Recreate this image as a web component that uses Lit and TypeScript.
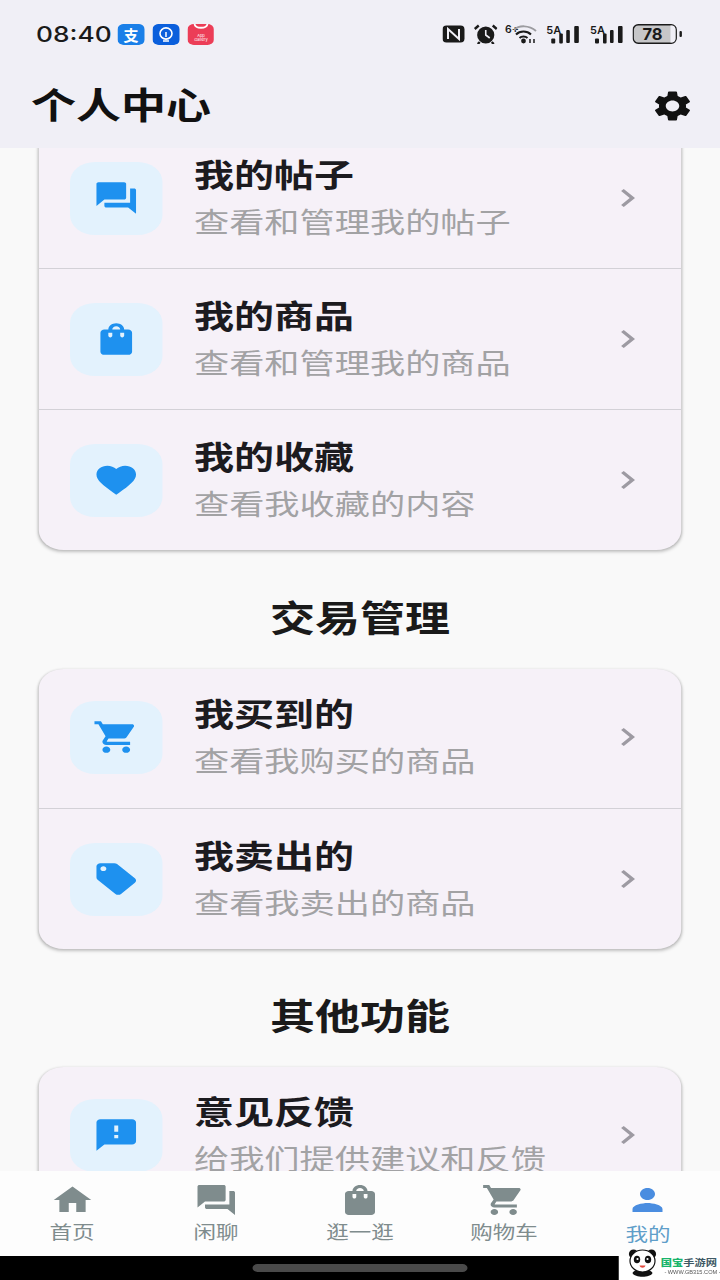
import { LitElement, html, css, svg } from "lit";
import { customElement } from "lit/decorators.js";

const P = {
  forum: "M21 6h-2v9H6v2c0 .55.45 1 1 1h11l4 4V7c0-.55-.45-1-1-1zm-4 6V3c0-.55-.45-1-1-1H3c-.55 0-1 .45-1 1v14l4-4h10c.55 0 1-.45 1-1z",
  bag: "M18 6h-2c0-2.21-1.79-4-4-4S8 3.79 8 6H6c-1.1 0-2 .9-2 2v12c0 1.1.9 2 2 2h12c1.1 0 2-.9 2-2V8c0-1.1-.9-2-2-2zm-8 4c0 .55-.45 1-1 1s-1-.45-1-1V8h2v2zm2-6c1.1 0 2 .9 2 2h-4c0-1.1.9-2 2-2zm4 6c0 .55-.45 1-1 1s-1-.45-1-1V8h2v2z",
  heart: "M12 21.35l-1.45-1.32C5.4 15.36 2 12.28 2 8.5 2 5.42 4.42 3 7.5 3c1.74 0 3.41.81 4.5 2.09C13.09 3.81 14.76 3 16.5 3 19.58 3 22 5.42 22 8.5c0 3.78-3.4 6.86-8.55 11.54L12 21.35z",
  cart: "M7 18c-1.1 0-1.99.9-1.99 2S5.9 22 7 22s2-.9 2-2-.9-2-2-2zM1 2v2h2l3.6 7.59-1.35 2.45c-.16.28-.25.61-.25.96 0 1.1.9 2 2 2h12v-2H7.42c-.14 0-.25-.11-.25-.25l.03-.12.9-1.63h7.45c.75 0 1.41-.41 1.75-1.03l3.58-6.49c.08-.14.12-.31.12-.48 0-.55-.45-1-1-1H5.21l-.94-2H1zm16 16c-1.1 0-1.99.9-1.99 2s.89 2 1.99 2 2-.9 2-2-.9-2-2-2z",
  tag: "M21.41 11.58l-9-9C12.05 2.22 11.55 2 11 2H4c-1.1 0-2 .9-2 2v7c0 .55.22 1.05.59 1.42l9 9c.36.36.86.58 1.41.58.55 0 1.05-.22 1.41-.59l7-7c.37-.36.59-.86.59-1.41 0-.55-.23-1.06-.59-1.42zM5.5 7C4.67 7 4 6.33 4 5.5S4.67 4 5.5 4 7 4.67 7 5.5 6.33 7 5.5 7z",
  feedback: "M20 2H4c-1.1 0-1.99.9-1.99 2L2 22l4-4h14c1.1 0 2-.9 2-2V4c0-1.1-.9-2-2-2zm-7 12h-2v-2h2v2zm0-4h-2V6h2v4z",
  gear: "M19.14 12.94c.04-.3.06-.61.06-.94 0-.32-.02-.64-.07-.94l2.03-1.58c.18-.14.23-.41.12-.61l-1.92-3.32c-.12-.22-.37-.29-.59-.22l-2.39.96c-.5-.38-1.03-.7-1.62-.94l-.36-2.54c-.04-.24-.24-.41-.48-.41h-3.84c-.24 0-.43.17-.47.41l-.36 2.54c-.59.24-1.13.57-1.62.94l-2.39-.96c-.22-.08-.47 0-.59.22L2.74 8.87c-.12.21-.08.47.12.61l2.03 1.58c-.05.3-.09.63-.09.94s.02.64.07.94l-2.03 1.58c-.18.14-.23.41-.12.61l1.92 3.32c.12.22.37.29.59.22l2.39-.96c.5.38 1.03.7 1.62.94l.36 2.54c.05.24.24.41.48.41h3.84c.24 0 .44-.17.47-.41l.36-2.54c.59-.24 1.13-.56 1.62-.94l2.39.96c.22.08.47 0 .59-.22l1.92-3.32c.12-.22.07-.47-.12-.61l-2.01-1.58zM12 15.6c-1.98 0-3.6-1.62-3.6-3.6s1.62-3.6 3.6-3.6 3.6 1.62 3.6 3.6-1.62 3.6-3.6 3.6z",
  home: "M10 20v-6h4v6h5v-8h3L12 3 2 12h3v8z",
  person: "M12 12c2.21 0 4-1.79 4-4s-1.79-4-4-4-4 1.79-4 4 1.79 4 4 4zm0 2c-2.67 0-8 1.34-8 4v2h16v-2c0-2.66-5.33-4-8-4z",
  chevron: "M10 6L8.59 7.41 13.17 12l-4.58 4.59L10 18l6-6z",
};

const icon = (d: string, cls: string) =>
  html`<svg class=${cls} viewBox="0 0 24 24"><path d=${d}></path></svg>`;

const signal = html`<svg class="st sig" viewBox="0 0 34 20" preserveAspectRatio="none">
  <text x="0" y="10" font-size="11" font-family="Inter, sans-serif" font-weight="600" fill="#1a1a1a">5A</text>
  ${[[5, 14.5, 5, 4], [13, 9.5, 10, 3.6], [20, 6, 13, 3.6], [28, 2, 17, 4.6]].map(
    ([x, y, h, w]) => svg`<rect x=${x} y=${y} width=${w} height=${h} rx="1" fill="#1a1a1a"></rect>`
  )}
</svg>`;

type Row = { i: string; t: string; s: string; cls?: string };
const sec1: Row[] = [
  { i: P.forum, t: "我的帖子", s: "查看和管理我的帖子" },
  { i: P.bag, t: "我的商品", s: "查看和管理我的商品" },
  { i: P.heart, t: "我的收藏", s: "查看我收藏的内容" },
];
const sec2: Row[] = [
  { i: P.cart, t: "我买到的", s: "查看我购买的商品", cls: "short" },
  { i: P.tag, t: "我卖出的", s: "查看我卖出的商品" },
];
const sec3: Row[] = [{ i: P.feedback, t: "意见反馈", s: "给我们提供建议和反馈", cls: "lift" }];
const nav = [
  { i: P.home, l: "首页" },
  { i: P.forum, l: "闲聊" },
  { i: P.bag, l: "逛一逛" },
  { i: P.cart, l: "购物车" },
  { i: P.person, l: "我的", active: true },
];

@customElement("app-root")
export class AppRoot extends LitElement {
  static styles = css`
    :host {
      display: block;
      width: 720px;
      height: 1280px;
      overflow: hidden;
      background: #f9f9f9;
      font-family: "Noto Sans CJK SC", "Noto Sans", sans-serif;
    }
    /* The reference is a phone capture squeezed to 720x1280: everything is 1.25x wider than tall. */
    .stage {
      position: relative;
      width: 576px;
      height: 1280px;
      display: flex;
      flex-direction: column;
      transform: scaleX(1.25);
      transform-origin: 0 0;
      background: #f9f9f9;
    }
    svg { display: block; fill: currentColor; }
    header {
      height: 148px;
      flex: none;
      background: #f0eff6;
      position: relative;
      z-index: 2;
    }
    .status {
      height: 68px;
      display: flex;
      align-items: center;
      padding: 0 30px 0 28.8px;
      color: #1a1a1a;
    }
    .time {
      font-family: Inter, sans-serif;
      font-weight: 500;
      font-size: 21px;
      width: 65.6px;
    }
    .apps { display: flex; gap: 6px; }
    .spacer { flex: 1; }
    .app {
      width: 21.6px;
      height: 21px;
      border-radius: 5px;
    }
    .rights { display: flex; align-items: center; }
    .st { height: 20px; }
    .nfc { width: 17.6px; margin-right: 7.2px; }
    .alarm { width: 19.2px; margin-right: 6.4px; }
    .wifi { width: 25.6px; margin-right: 7.2px; }
    .sig { width: 27.2px; margin-right: 7.2px; }
    .batt { width: 40px; }
    .bar {
      height: 72px;
      display: flex;
      align-items: center;
      justify-content: space-between;
      padding: 0 20px 0 24.8px;
    }
    h1 {
      margin: 0 0 3px;
      font-size: 36px;
      font-weight: 700;
      line-height: 50px;
      color: #111;
    }
    .gear { width: 36px; height: 36px; color: #111; margin-top: 4px; }
    main {
      flex: 1;
      min-height: 0;
      overflow: hidden;
    }
    .scroll { margin-top: -20px; padding: 0 30.8px; }
    .card {
      background: #f6f1f8;
      border-radius: 20px;
      box-shadow: 0 2px 3px rgba(0, 0, 0, 0.22), 0 0 2px rgba(0, 0, 0, 0.1);
    }
    .row {
      height: 140px;
      box-sizing: content-box;
      display: flex;
      align-items: center;
      padding: 0 25.2px 0 25.2px;
    }
    .row + .row { border-top: 1px solid #d3d1d7; }
    .row.short { height: 136px; padding-bottom: 3px; }
    .row.lift { height: 136px; padding-bottom: 4px; }
    .tile {
      width: 73.6px;
      height: 73px;
      flex: none;
      border-radius: 20px;
      background: #e3f2fd;
      display: flex;
      align-items: center;
      justify-content: center;
      color: #1e91ef;
    }
    .tile svg { width: 38px; height: 38px; }
    .texts {
      flex: 1;
      min-width: 0;
      margin-left: 25.6px;
      padding-bottom: 5px;
      display: flex;
      flex-direction: column;
      gap: 7px;
    }
    .t {
      font-size: 32px;
      line-height: 44px;
      font-weight: 700;
      color: #1c1b1f;
    }
    .s {
      font-size: 28.16px;
      line-height: 38px;
      color: #a2a2a4;
      white-space: nowrap;
    }
    .chev { width: 36px; height: 36px; color: #9d9aa2; flex: none; }
    h2 {
      margin: 0;
      height: 119px;
      box-sizing: border-box;
      padding-top: 41px;
      text-align: center;
      font-size: 36px;
      line-height: 50px;
      font-weight: 700;
      color: #1a1a1a;
    }
    h2.next { height: 118px; padding-top: 40px; }
    nav {
      height: 85px;
      flex: none;
      display: grid;
      grid-template-columns: repeat(5, 1fr);
      background: #fdfdfd;
      position: relative;
      z-index: 2;
    }
    .item {
      display: flex;
      flex-direction: column;
      align-items: center;
      padding-top: 11px;
      color: #7f8c8d;
    }
    .item svg { width: 36px; height: 36px; }
    .item span { font-size: 18px; line-height: 24px; margin-top: 1px; }
    .item.on svg { color: #4a8de0; }
    .item.on span { color: #5f9ec9; margin-top: 3px; }
    .gesture {
      height: 24px;
      flex: none;
      background: #000;
      display: flex;
      align-items: center;
      justify-content: center;
    }
    .pill {
      width: 172.8px;
      height: 8px;
      border-radius: 4px;
      background: #4a4a4a;
    }
    .mark {
      position: absolute;
      right: 0;
      bottom: 0;
      width: 81px;
      height: 24px;
      background: #fff;
      z-index: 3;
    }
    .panda {
      position: absolute;
      left: 7px;
      bottom: 3px;
      width: 24px;
      height: 30px;
    }
    .brand {
      position: absolute;
      left: 33.5px;
      top: 0;
      font-size: 9px;
      line-height: 14px;
      font-weight: 700;
      white-space: nowrap;
      color: #3f5a66;
    }
    .brand b { color: #19b46b; }
    .url {
      position: absolute;
      left: 36.5px;
      top: 14px;
      font-family: "Liberation Sans", sans-serif;
      font-size: 4.5px;
      line-height: 6px;
      color: #555;
      white-space: nowrap;
    }
  `;

  private renderCard(rows: Row[]) {
    return html`<section class="card">
      ${rows.map(
        (r) => html`<div class="row ${r.cls ?? ""}">
          <div class="tile">${icon(r.i, "ic")}</div>
          <div class="texts">
            <div class="t">${r.t}</div>
            <div class="s">${r.s}</div>
          </div>
          ${icon(P.chevron, "chev")}
        </div>`
      )}
    </section>`;
  }

  render() {
    return html`<div class="stage">
      <header>
        <div class="status">
          <div class="time">08:40</div>
          <div class="apps">
            <svg class="app" viewBox="0 0 27 21" preserveAspectRatio="none">
              <rect width="27" height="21" rx="5" fill="#1a7fe8"></rect>
              <text x="13.5" y="16.5" text-anchor="middle" font-size="15" font-weight="700" font-family="Noto Sans CJK SC" fill="#fff">支</text>
            </svg>
            <svg class="app" viewBox="0 0 27 21" preserveAspectRatio="none">
              <rect width="27" height="21" rx="5" fill="#0b5fdc"></rect>
              <ellipse cx="13.5" cy="9.5" rx="6" ry="5.6" fill="none" stroke="#fff" stroke-width="1.6"></ellipse>
              <path d="M10.5 17h6M13.5 8v5" stroke="#fff" stroke-width="1.5" fill="none"></path>
            </svg>
            <svg class="app" viewBox="0 0 27 21" preserveAspectRatio="none">
              <rect width="27" height="21" rx="5" fill="#ec3d57"></rect>
              <path d="M7 0c1 5 12 5 13 0" fill="none" stroke="#fff" stroke-width="1.8"></path>
              <text x="13.5" y="13" text-anchor="middle" font-size="4" font-family="Inter" fill="#fff">App</text>
              <text x="13.5" y="17.5" text-anchor="middle" font-size="4" font-family="Inter" fill="#fff">Gallery</text>
            </svg>
          </div>
          <div class="spacer"></div>
          <div class="rights">
            <svg class="st nfc" viewBox="0 0 22 20" preserveAspectRatio="none">
              <rect x="0" y="1.5" width="22" height="17" rx="4" fill="#1a1a1a"></rect>
              <path d="M5.5 15V5l11 10V5" fill="none" stroke="#f0eff6" stroke-width="2"></path>
            </svg>
            <svg class="st alarm" viewBox="0 0 24 20" preserveAspectRatio="none">
              <circle cx="12" cy="11" r="8.6" fill="#1a1a1a"></circle>
              <path d="M1 5l4-3.5M23 5l-4-3.5M6 18l-2 2M18 18l2 2" stroke="#1a1a1a" stroke-width="2.4" fill="none"></path>
              <path d="M12 6v5l4 3" stroke="#f0eff6" stroke-width="1.6" fill="none"></path>
            </svg>
            <svg class="st wifi" viewBox="0 0 32 20" preserveAspectRatio="none">
              <text x="0" y="9" font-size="10.5" font-family="Inter, sans-serif" font-weight="600" fill="#1a1a1a">6+</text>
              <path d="M9 6c5-5 15-5 22 1" fill="none" stroke="#9c9ca0" stroke-width="2"></path>
              <path d="M11 10.500c4-4 11-4 15 0M14.500 14c2-2 6-2 8 0" fill="none" stroke="#1a1a1a" stroke-width="2"></path>
              <circle cx="18.500" cy="17" r="2.400" fill="#1a1a1a"></circle>
              <path d="M25 15v4M29 15v4" stroke="#1a1a1a" stroke-width="1.500"></path>
            </svg>
            ${signal}
            ${signal}
            <svg class="st batt" viewBox="0 0 50 20" preserveAspectRatio="none">
              <rect x="0.700" y="0.700" width="43" height="18.600" rx="5" fill="#c6c6c8" stroke="#1a1a1a" stroke-width="1.400"></rect>
              <path d="M38 1.400h1c3 0 4 2 4 4v9c0 2-1 4-4 4h-1z" fill="#f0eff6"></path>
              <text x="20" y="15.800" text-anchor="middle" font-size="16.500" font-weight="700" font-family="Inter, sans-serif" fill="#1a1a1a">78</text>
              <rect x="47" y="7" width="2.400" height="6" rx="1" fill="#1a1a1a"></rect>
            </svg>
          </div>
        </div>
        <div class="bar">
          <h1>个人中心</h1>
          ${icon(P.gear, "gear")}
        </div>
      </header>
      <main>
        <div class="scroll">
          ${this.renderCard(sec1)}
          <h2>交易管理</h2>
          ${this.renderCard(sec2)}
          <h2 class="next">其他功能</h2>
          ${this.renderCard(sec3)}
        </div>
      </main>
      <nav>
        ${nav.map(
          (n) => html`<div class="item ${n.active ? "on" : ""}">
            ${icon(n.i, "ni")}
            <span>${n.l}</span>
          </div>`
        )}
      </nav>
      <div class="gesture"><div class="pill"></div></div>
      <div class="mark">
        <svg class="panda" viewBox="0 0 30 30" preserveAspectRatio="none">
          <circle cx="6" cy="7" r="4.600" fill="#111"></circle>
          <circle cx="24" cy="7" r="4.600" fill="#111"></circle>
          <path d="M5 26c2-5 18-5 20 0c-2 5-18 5-20 0z" fill="#111"></path>
          <ellipse cx="15" cy="14" rx="12.500" ry="11" fill="#fff" stroke="#111" stroke-width="1.200"></ellipse>
          <ellipse cx="9.500" cy="12.500" rx="3.200" ry="3.800" fill="#111"></ellipse>
          <ellipse cx="20.500" cy="12.500" rx="3.200" ry="3.800" fill="#111"></ellipse>
          <circle cx="10" cy="12" r="1.100" fill="#fff"></circle>
          <circle cx="20" cy="12" r="1.100" fill="#fff"></circle>
          <path d="M12 18.500c1 3 5 3 6 0z" fill="#e2483d"></path>
        </svg>
        <div class="brand"><b>国宝</b>手游网</div>
        <div class="url">- WWW.GB315.COM -</div>
      </div>
    </div>`;
  }
}
